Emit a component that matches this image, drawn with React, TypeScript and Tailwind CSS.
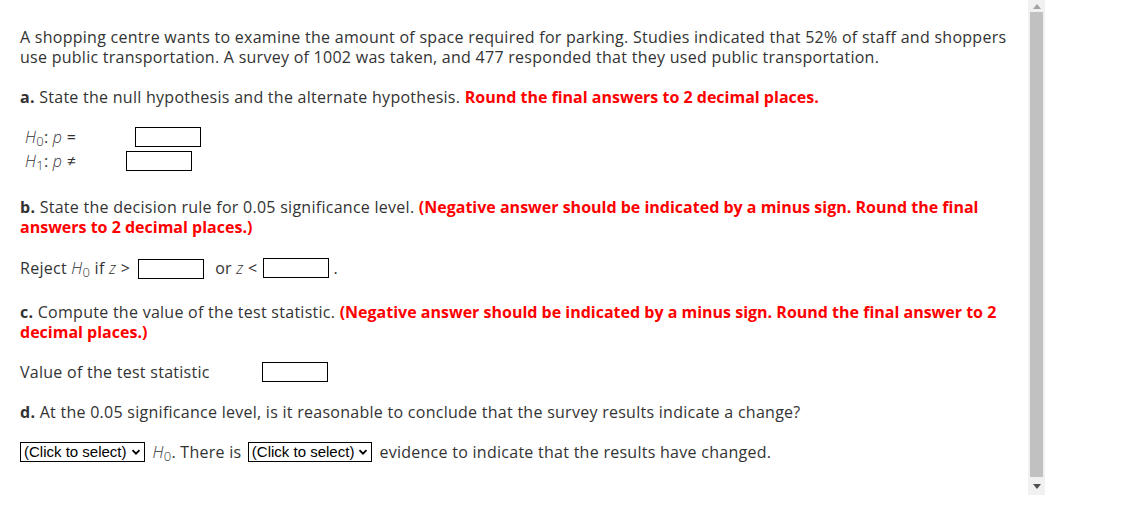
import React from 'react';

const font = { fontFamily: '"Open Sans", "Liberation Sans", sans-serif' };

function Box({ w = 'w-[66px]' }: { w?: string }) {
  return <span className={`inline-block ${w} h-[20px] border border-black bg-white align-middle`} />;
}

function H({ sub }: { sub: string }) {
  return (
    <span className="italic font-light">
      H<sub className="text-[13px] not-italic font-light">{sub}</sub>
    </span>
  );
}

function Select() {
  return (
    <span
      className="inline-flex items-center gap-[4px] h-[20px] px-[3px] border border-black bg-white text-black text-[15px] tracking-normal align-middle"
      style={{ fontFamily: '"Liberation Sans", Arial, sans-serif' }}
    >
      (Click to select)
      <svg width="10" height="10" viewBox="0 0 10 10">
        <path d="M1.5 3.2 L5 6.7 L8.5 3.2" fill="none" stroke="black" strokeWidth="1.8" />
      </svg>
    </span>
  );
}

export default function App() {
  return (
    <div className="flex w-[1121px] h-[508px] bg-white overflow-hidden">
      <div className="w-[1028px] pl-[20px] pr-[10px] pt-[27px] text-[16px] leading-[20px] tracking-[0.27px] text-[#333]" style={font}>
        <p className="pr-[6px]">
          A shopping centre wants to examine the amount of space required for parking. Studies indicated that 52% of staff and shoppers
          use public transportation. A survey of 1002 was taken, and 477 responded that they used public transportation.
        </p>

        <p className="mt-[20px]">
          <b>a.</b> State the null hypothesis and the alternate hypothesis.{' '}
          <b className="text-[#ff0000] tracking-[0px]">Round the final answers to 2 decimal places.</b>
        </p>

        <div className="mt-[20px] pl-[5px] flex flex-col gap-[4px]">
          <div className="flex items-center h-[20px]">
            <span className="w-[110px]">
              <H sub="0" />: <i className="font-light">p</i> =
            </span>
            <Box />
          </div>
          <div className="flex items-center h-[20px]">
            <span className="w-[101px]">
              <H sub="1" />: <i className="font-light">p</i> ≠
            </span>
            <Box />
          </div>
        </div>

        <p className="mt-[26px] pr-[20px]">
          <b>b.</b> State the decision rule for 0.05 significance level.{' '}
          <b className="text-[#ff0000] tracking-[0px]">
            (Negative answer should be indicated by a minus sign. Round the final answers to 2 decimal places.)
          </b>
        </p>

        <div className="mt-[20px] flex items-center h-[22px]">
          Reject&nbsp;<H sub="0" />&nbsp;if&nbsp;<i className="font-light">z</i>&nbsp;&gt;
          <span className="ml-[8px]">
            <Box />
          </span>
          <span className="ml-[11px] mr-[6px]">or&nbsp;<i className="font-light">z</i>&nbsp;&lt;</span>
          <Box />
          <span className="ml-[4px]">.</span>
        </div>

        <p className="mt-[23px] pr-[10px]">
          <b>c.</b> Compute the value of the test statistic.{' '}
          <b className="text-[#ff0000] tracking-[0px]">
            (Negative answer should be indicated by a minus sign. Round the final answer to 2 decimal places.)
          </b>
        </p>

        <div className="mt-[20px] flex items-center h-[20px]">
          <span className="w-[242px]">Value of the test statistic</span>
          <Box />
        </div>

        <p className="mt-[20px]">
          <b>d.</b> At the 0.05 significance level, is it reasonable to conclude that the survey results indicate a change?
        </p>

        <div className="mt-[20px] flex items-center h-[20px]">
          <Select />
          <span className="ml-[8px] mr-[2px]">
            <H sub="0" />. There is&nbsp;
          </span>
          <Select />
          <span className="ml-[7px]">evidence to indicate that the results have changed.</span>
        </div>
      </div>

      <div className="w-[17px] h-[495px] bg-[#f1f1f1] flex flex-col items-center">
        <div className="h-[12px] flex items-center justify-center">
          <svg width="8" height="5" viewBox="0 0 8 5">
            <path d="M0 5 L4 0 L8 5 Z" fill="#a3a3a3" />
          </svg>
        </div>
        <div className="w-[13px] flex-1 bg-[#c1c1c1]" />
        <div className="h-[18px] flex items-center justify-center">
          <svg width="8" height="5" viewBox="0 0 8 5">
            <path d="M0 0 L8 0 L4 5 Z" fill="#505050" />
          </svg>
        </div>
      </div>
    </div>
  );
}
